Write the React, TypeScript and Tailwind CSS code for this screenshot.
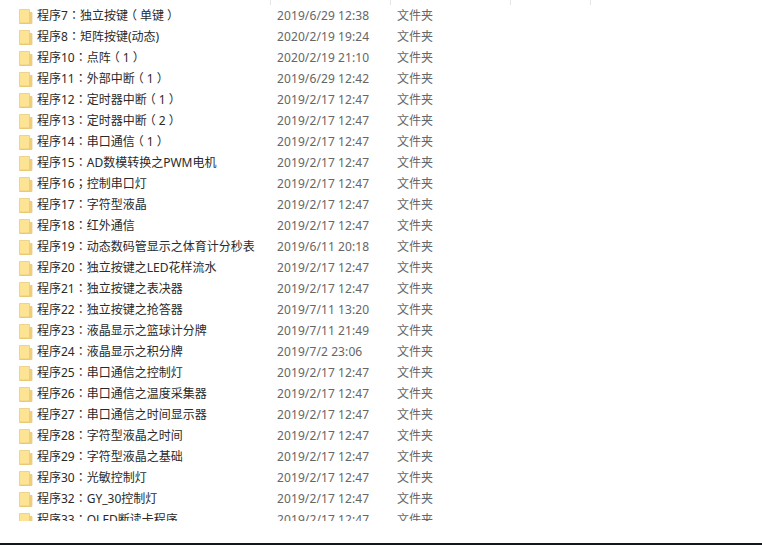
const rows: [string, string][] = [
  ["程序7：独立按键（单键）", "2019/6/29 12:38"],
  ["程序8：矩阵按键(动态)", "2020/2/19 19:24"],
  ["程序10：点阵（1）", "2020/2/19 21:10"],
  ["程序11：外部中断（1）", "2019/6/29 12:42"],
  ["程序12：定时器中断（1）", "2019/2/17 12:47"],
  ["程序13：定时器中断（2）", "2019/2/17 12:47"],
  ["程序14：串口通信（1）", "2019/2/17 12:47"],
  ["程序15：AD数模转换之PWM电机", "2019/2/17 12:47"],
  ["程序16；控制串口灯", "2019/2/17 12:47"],
  ["程序17：字符型液晶", "2019/2/17 12:47"],
  ["程序18：红外通信", "2019/2/17 12:47"],
  ["程序19：动态数码管显示之体育计分秒表", "2019/6/11 20:18"],
  ["程序20：独立按键之LED花样流水", "2019/2/17 12:47"],
  ["程序21：独立按键之表决器", "2019/2/17 12:47"],
  ["程序22：独立按键之抢答器", "2019/7/11 13:20"],
  ["程序23：液晶显示之篮球计分牌", "2019/7/11 21:49"],
  ["程序24：液晶显示之积分牌", "2019/7/2 23:06"],
  ["程序25：串口通信之控制灯", "2019/2/17 12:47"],
  ["程序26：串口通信之温度采集器", "2019/2/17 12:47"],
  ["程序27：串口通信之时间显示器", "2019/2/17 12:47"],
  ["程序28：字符型液晶之时间", "2019/2/17 12:47"],
  ["程序29：字符型液晶之基础", "2019/2/17 12:47"],
  ["程序30：光敏控制灯", "2019/2/17 12:47"],
  ["程序32：GY_30控制灯", "2019/2/17 12:47"],
  ["程序33：OLED断读卡程序", "2019/2/17 12:47"],
];

function Folder() {
  return (
    <svg width="15" height="17" viewBox="0 0 15 17" className="shrink-0">
      <path d="M1.5 1.5 H11.5 V15.5 H1.5 Z" fill="#fde394" stroke="#ecd38f" />
      <path d="M12 4.5 H14 V15.5 H2 V15 H12 Z" fill="#f3d27f" stroke="#e6c676" strokeWidth="0.7" />
    </svg>
  );
}

function Name({ text }: { text: string }) {
  const parts = text.split(/([：；（）])/);
  return (
    <>
      {parts.map((p, i) => {
        if (p === "：" || p === "；")
          return <span key={i} className="font-['Noto_Sans_CJK_TC',sans-serif]">{p}</span>;
        if (p === "（")
          return <span key={i} className="inline-block w-[12px] indent-[-3px]">{p}</span>;
        if (p === "）")
          return <span key={i} className="inline-block w-[12px] indent-[3px]">{p}</span>;
        return <span key={i}>{p}</span>;
      })}
    </>
  );
}

export default function App() {
  return (
    <div className="w-[762px] h-[545px] bg-white flex flex-col overflow-hidden font-['Noto_Sans','Noto_Sans_CJK_SC',sans-serif] text-[12px]">
      <div className="flex-1 min-h-0">
        <div className="h-[521px] overflow-hidden relative pt-[6px]">
          <div className="absolute left-[270px] top-0 w-px h-[5px] bg-[#e5e5e5]" />
          <div className="absolute left-[390px] top-0 w-px h-[5px] bg-[#e5e5e5]" />
          <div className="absolute left-[510px] top-0 w-px h-[5px] bg-[#e5e5e5]" />
          <div className="absolute left-[590px] top-0 w-px h-[5px] bg-[#e5e5e5]" />
          {rows.map(([name, date]) => (
            <div key={name} className="h-[21px] flex items-center pl-[18px] pb-[2px]">
              <div className="shrink-0 translate-y-px"><Folder /></div>
              <span className="w-[240px] pl-[4px] text-[#2a2a2a] whitespace-nowrap overflow-hidden leading-[16px]"><Name text={name} /></span>
              <span className="w-[120px] text-[#666] whitespace-nowrap leading-[16px] pl-[4px] tracking-[0.1px]">{date}</span>
              <span className="pl-[4px] text-[#666] whitespace-nowrap leading-[16px]">文件夹</span>
            </div>
          ))}
        </div>
      </div>
      <div className="h-[2px] bg-[#10181e] shrink-0" />
    </div>
  );
}
